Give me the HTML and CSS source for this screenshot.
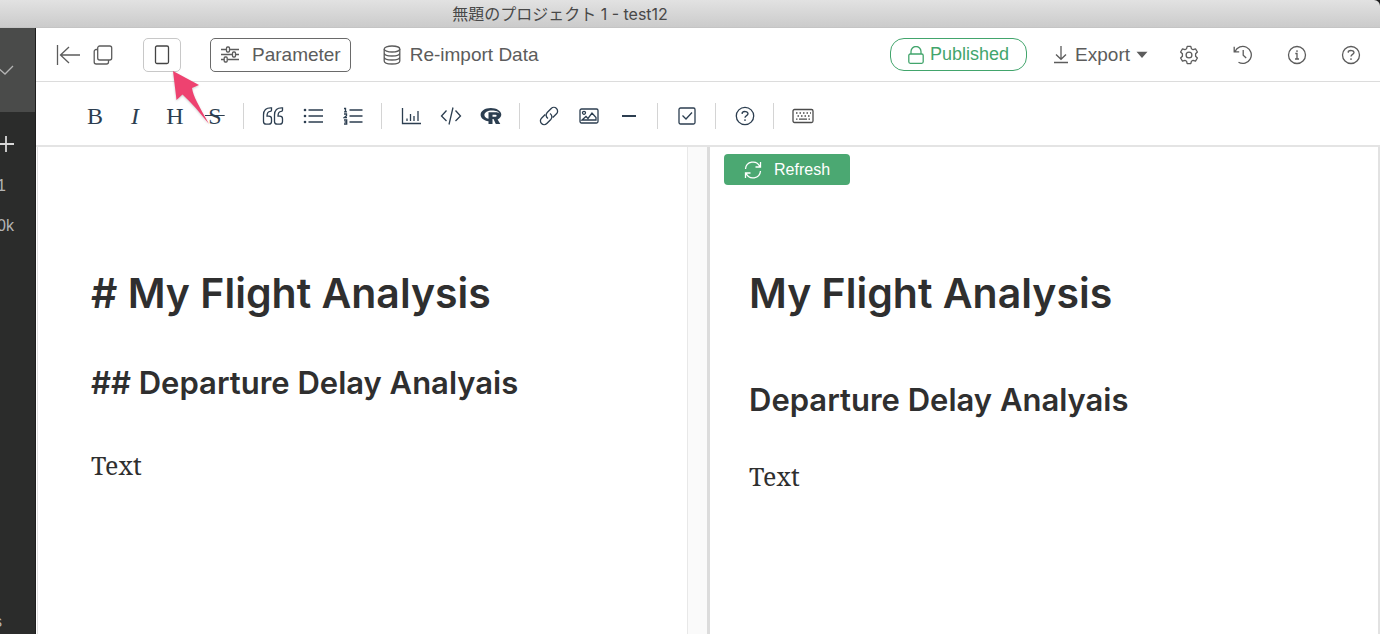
FILE: index.html
```html
<!DOCTYPE html>
<html lang="ja">
<head>
<meta charset="utf-8">
<title>無題のプロジェクト 1 - test12</title>
<link rel="stylesheet" href="styles.css">
</head>
<body>
<div class="window">
  <header class="titlebar">無題のプロジェクト 1 - test12</header>
  <div class="workspace">
    <aside class="sidebar">
      <button class="side-head" aria-label="Expand project"><svg width="20" height="12" viewBox="0 0 20 12"><path d="M1 2l9 8 8-8"/></svg></button>
      <button class="side-add" aria-label="Add"><svg width="18" height="18" viewBox="0 0 18 18"><path d="M1 9h16M9 1v16"/></svg></button>
      <span class="side-item side-count">1</span>
      <span class="side-item side-rows">0k</span>
      <span class="side-item side-foot">s</span>
    </aside>
    <main class="note">
      <div class="actions">
        <button class="plain back" aria-label="Back"><svg width="24" height="22" viewBox="0 0 24 22"><path d="M1.500 1v20M4.500 11H24M13 3l-8.500 8 8.500 8"/></svg></button>
        <button class="plain copy" aria-label="Duplicate"><svg width="20" height="20" viewBox="0 0 20 20"><rect x="4.700" y="1" width="14" height="14" rx="2"/><path d="M4.700 4.500H3.200a2 2 0 0 0-2 2V17a2 2 0 0 0 2 2h10.300a2 2 0 0 0 2-2v-2"/></svg></button>
        <button class="boxed layout" aria-label="Single pane">
          <svg width="16" height="20" viewBox="0 0 16 20"><rect x="1.500" y="1" width="13" height="17.500" rx="1.500"/></svg>
        </button>
        <button class="boxed parameter">
          <svg width="20" height="18" viewBox="0 0 20 18"><path d="M1 3.500h5.500M9.500 3.500H19M1 8.500h11.500M15.500 8.500H19M1 13.500h3M7.500 13.500H19"/><rect x="6.500" y="1" width="3" height="5" rx="1"/><rect x="12.500" y="6" width="3" height="5" rx="1"/><rect x="4.200" y="11" width="3" height="5" rx="1"/></svg>
          Parameter
        </button>
        <button class="plain reimport">
          <svg width="18" height="20" viewBox="0 0 18 20"><ellipse cx="9" cy="4" rx="7.800" ry="3"/><path d="M1.200 4v12c0 1.700 3.500 3 7.800 3s7.800-1.300 7.800-3V4M1.200 8c0 1.700 3.500 3 7.800 3s7.800-1.300 7.800-3M1.200 12c0 1.700 3.500 3 7.800 3s7.800-1.300 7.800-3"/></svg>
          Re-import Data
        </button>
        <div class="actions-end">
          <button class="published">
            <svg width="16" height="18" viewBox="0 0 16 18"><rect x="0.800" y="8" width="14.400" height="9.300" rx="1.500"/><path d="M3 8V5.500a5 5 0 0 1 10 0V8"/></svg>
            Published
          </button>
          <button class="plain export">
            <svg width="16" height="18" viewBox="0 0 16 18"><path d="M8 0v13M3 8.500l5 4.800 5-4.800M1 16.500h14"/></svg>
            Export
            <svg class="caret" width="12" height="8" viewBox="0 0 12 8"><path d="M0.500 0.800h11L6 7z"/></svg>
          </button>
          <button class="plain gear" aria-label="Settings"><svg width="20" height="20" viewBox="0 0 20 20"><path stroke-linejoin="round" d="M8.200 1.300h3.600l.6 2.400 1.700 1 2.400-.8 1.900 3.100-1.800 1.800v2.400l1.800 1.800-1.900 3.100-2.400-.8-1.700 1-.6 2.400H8.200l-.6-2.400-1.700-1-2.400.8L1.600 13l1.800-1.800V8.800L1.600 7l1.900-3.100 2.400.8 1.700-1z"/><circle cx="10" cy="10" r="2.900"/></svg></button>
          <button class="plain" aria-label="History"><svg width="20" height="20" viewBox="0 0 20 20"><path d="M2 6.500A8.500 8.500 0 1 1 5.500 17.200M1.200 1.800v5h5M10.200 5v5.200l3 2.800"/></svg></button>
          <button class="plain" aria-label="Information"><svg width="20" height="20" viewBox="0 0 20 20"><circle cx="10" cy="10" r="8.500"/><path d="M8.300 8.500H10V14M8 14h4M10 5.300v1.600"/></svg></button>
          <button class="plain" aria-label="Help"><svg width="20" height="20" viewBox="0 0 20 20"><circle cx="10" cy="10" r="8.500"/><path d="M7.300 7.700V6.300C8.800 5.200 13 5 13 7.600c0 1.900-3 1.700-3 4M10 13.300v1.600"/></svg></button>
        </div>
      </div>

      <div class="format" role="toolbar" aria-label="Formatting">
        <button class="tool">B</button>
        <button class="tool italic">I</button>
        <button class="tool">H</button>
        <button class="tool"><s class="strike">S</s></button>
        <span class="sep"></span>
        <button class="tool" aria-label="Quote"><svg width="22" height="20" viewBox="0 0 22 20"><path d="M9.500 1.800C4 1.500 1.500 4 1.500 9v6.500c0 1.800 1 2.700 2.700 2.700h2.600c1.700 0 2.700-.9 2.700-2.700v-2.800c0-1.700-1-2.600-2.700-2.600H5c0-3.200 1-4.700 3.300-4.800.8 0 1.200-.3 1.200-1zM20.500 1.800c-5.500-.3-8 2.200-8 7.200v6.500c0 1.800 1 2.700 2.700 2.700h2.600c1.700 0 2.700-.9 2.700-2.700v-2.800c0-1.700-1-2.600-2.700-2.600H16c0-3.200 1-4.700 3.300-4.800.8 0 1.200-.3 1.200-1z"/></svg></button>
        <button class="tool" aria-label="Bulleted list"><svg width="20" height="18" viewBox="0 0 20 18"><path d="M5.500 3H20M5.500 9H20M5.500 15H20"/><g class="solid"><circle cx="2" cy="3" r="1.300"/><circle cx="2" cy="9" r="1.300"/><circle cx="2" cy="15" r="1.300"/></g></svg></button>
        <button class="tool" aria-label="Numbered list"><svg width="20" height="18" viewBox="0 0 20 18"><path d="M6.500 3H19.500M6.500 9H19.500M6.500 15H19.500"/><path d="M1 1.500h1.500v3.300M1 4.800h3M1 7h2.500v1.800L1.200 10.700H4M1 13h2.700v4H1M1.500 15h2"/></svg></button>
        <span class="sep"></span>
        <button class="tool" aria-label="Chart"><svg width="20" height="20" viewBox="0 0 20 20"><path d="M1.500 2v15.500H20M6 12.500V15M9.500 8v7M13 10v5M17 5v10"/></svg></button>
        <button class="tool" aria-label="Code"><svg width="22" height="20" viewBox="0 0 22 20"><path d="M6.500 4.500L1.500 10l5 5M15.500 4.500l5 5.500-5 5M13 1.500L9 18.500"/></svg></button>
        <button class="tool" aria-label="R script"><svg width="22" height="18" viewBox="0 0 22 18"><path class="solid" fill-rule="evenodd" d="M10.800 1C5 1 .6 3.900.6 7.700c0 3.300 3.400 6 7.900 6.600V17h4v-5h1l2.300 5h4.500l-2.700-4.600C20 11.400 21.300 9.700 21.300 7.600 21.300 3.900 16.500 1 10.800 1zM8.500 11.800C5.900 11.100 4.400 9.700 4.400 7.900c0-2.600 3.300-4.500 7.500-4.500 4 0 7 1.200 7.600 3.300-.7-1-2-1.500-3.700-1.500H8.500zm4-4.100h3c1.500 0 1.500 2.100 0 2.100h-3z"/></svg></button>
        <span class="sep"></span>
        <button class="tool" aria-label="Link"><svg width="20" height="20" viewBox="0 0 20 20"><path d="M9 12.500a3.900 3.900 0 0 1-.8-6l4-4a3.700 3.700 0 0 1 5.300 5.300l-3.700 3.700M11 7.500a3.900 3.900 0 0 1 .8 6l-4 4a3.700 3.700 0 0 1-5.300-5.300l3.700-3.700"/></svg></button>
        <button class="tool" aria-label="Image"><svg width="20" height="16" viewBox="0 0 20 16"><rect x="1" y="1" width="18" height="14" rx="1.500"/><circle cx="5" cy="4.800" r="1.500"/><path d="M3 12l4-3.500 2 2L13 5l4 4.500V12z"/></svg></button>
        <button class="tool" aria-label="Horizontal rule"><svg class="heavy" width="16" height="4" viewBox="0 0 16 4"><path d="M1 2h14"/></svg></button>
        <span class="sep"></span>
        <button class="tool" aria-label="Task"><svg width="18" height="18" viewBox="0 0 18 18"><rect x="1" y="1" width="16" height="16" rx="1.500"/><path d="M4.500 8.500l3.500 3.500 6-6.500"/></svg></button>
        <span class="sep"></span>
        <button class="tool" aria-label="Syntax help"><svg width="20" height="20" viewBox="0 0 20 20"><circle cx="10" cy="10" r="8.700"/><path d="M7.200 7.900V6.700C8.500 5 13 5 13 7.800c0 2-3 1.700-3 4M10 13.200v1.800"/></svg></button>
        <span class="sep"></span>
        <button class="tool keyboard" aria-label="Keyboard shortcuts"><svg width="22" height="16" viewBox="0 0 22 16"><rect x="1" y="1.500" width="20" height="13" rx="1.500"/><path stroke-dasharray="1.500 2" d="M4 5h15M5.500 8h12"/><path d="M4 11.200h1.500M7 11.200h8M16.500 11.200H18"/></svg></button>
      </div>

      <div class="panes">
        <section class="editor" contenteditable="true" role="textbox" aria-multiline="true" aria-label="Markdown source" spellcheck="false">
          <p class="h1"># My Flight Analysis</p>
          <p class="h2">## Departure Delay Analyais</p>
          <p class="body">Text</p>
        </section>
        <div class="scroll-track"></div>
        <section class="preview">
          <button class="refresh">
            <svg width="18" height="18" viewBox="0 0 18 18"><path d="M1.500 8A7.500 7.500 0 0 1 15.800 5.500M16.500 1v5h-5M16.500 10A7.500 7.500 0 0 1 2.200 12.500M1.500 17v-5h5"/></svg>
            Refresh
          </button>
          <h1 class="h1">My Flight Analysis</h1>
          <h2 class="h2">Departure Delay Analyais</h2>
          <p class="body">Text</p>
        </section>
      </div>
      <svg class="pointer" width="42" height="56" viewBox="0 0 42 56" aria-hidden="true"><path d="M3 1l26 14-7 3c1 8 7 18 17 36C30 43 22 33 12.500 24.500L6.500 30z"/></svg>
    </main>
  </div>
</div>
</body>
</html>
```
FILE: styles.css
```css
* { box-sizing: border-box; }
body {
  margin: 0;
  background: #1d1d1d;
  color: #5c5c5c;
  font-family: "Liberation Sans", "Noto Sans CJK JP", sans-serif;
}
button {
  margin: 0;
  padding: 0;
  border: 0;
  background: none;
  color: inherit;
  font: inherit;
  white-space: nowrap;
}
svg {
  display: block;
  flex: none;
  fill: none;
  stroke: currentColor;
  stroke-width: 1.3;
}
.window {
  display: flex;
  flex-direction: column;
  min-height: 100vh;
}
.titlebar {
  height: 28px;
  border-bottom: 1px solid #c4c4c4;
  border-top-right-radius: 6px;
  background: linear-gradient(#e2e2e2, #cbcbcb);
  color: #484848;
  font: 16px/28px Inter, "Noto Sans CJK JP", sans-serif;
  text-align: center;
  padding-right: 260px;
}
.workspace { display: flex; flex: 1; }

.sidebar {
  display: flex;
  flex-direction: column;
  align-items: flex-end;
  width: 36px;
  overflow: hidden;
  background: #2b2c2b;
  color: #b4b4b4;
  border-right: 1px solid #1e1e1e;
  font: 16px/20px "Liberation Sans", sans-serif;
}
.side-head {
  display: flex;
  align-items: center;
  justify-content: flex-end;
  width: 100%;
  height: 84px;
  padding-right: 20px;
  background: #4a4b4a;
}
.side-add { margin: 23px 20px 0 0; color: #d8d8d8; }
.side-add svg { stroke-width: 1.8; }
.side-count { margin: 23px 29px 0 0; }
.side-rows { margin: 20px 21px 0 0; }
.side-foot { margin: auto 33px 2px 0; }

.note {
  position: relative;
  display: flex;
  flex: 1;
  flex-direction: column;
  min-width: 0;
  background: #fff;
}
.actions {
  display: flex;
  align-items: center;
  height: 54px;
  padding: 0 19px 0 20px;
  border-bottom: 1px solid #dcdcdc;
  font-size: 19px;
}
.actions button { display: flex; align-items: center; }
.copy { margin-left: 13px; }
.boxed { height: 34px; border: 1px solid #6a6a6a; border-radius: 5px; }
.layout {
  width: 38px;
  justify-content: center;
  margin-left: 30px;
  border-color: #c8c8c8;
  color: #444;
}
.parameter { gap: 12px; margin-left: 29px; padding: 0 9px; }
.reimport { gap: 9px; margin-left: 32px; }
.actions-end {
  display: flex;
  align-items: center;
  gap: 34px;
  margin-left: auto;
}
.published {
  gap: 6px;
  height: 33px;
  padding: 0 17px;
  border: 1px solid #42a56c;
  border-radius: 14px;
  color: #42a56c;
  font-size: 18px;
}
.export { gap: 6px; margin: 0 -3px 0 -8px; }
.caret { fill: currentColor; stroke: none; }

.format {
  display: flex;
  align-items: center;
  height: 65px;
  padding: 4px 0 0 39px;
  border-bottom: 2px solid #e4e4e4;
  color: #2c3e50;
}
.tool {
  display: flex;
  align-items: center;
  justify-content: center;
  width: 40px;
  height: 32px;
  font: 24px/32px "Liberation Serif", serif;
}
.italic { font-style: italic; }
.strike { padding: 0 3px; background: linear-gradient(currentColor, currentColor) center / 100% 1px no-repeat; text-decoration: none; }
.solid { fill: currentColor; stroke: none; }
.heavy { stroke-width: 2; }
.keyboard { color: #4c4c4c; }
.sep { width: 1px; height: 26px; margin: 0 9px 0 8px; background: #d4d4d4; }

.panes {
  display: flex;
  flex: 1;
  border: solid #e2e2e2;
  border-width: 0 2px 0 1px;
  margin-left: 1px;
  color: #2f2f2f;
}
.panes p, .panes h1, .panes h2 { margin: 0; }
.editor { flex: 1; padding: 120px 53px 0; outline: 0; }
.scroll-track {
  width: 23px;
  border: solid #e8e8e8;
  border-width: 0 3px 0 1px;
  border-right-color: #dcdcdc;
  background: #fafafa;
}
.preview { flex: 0 0 calc(50% - 2px); padding: 7px 40px 0 14px; }
.h1 { font: 600 41px/52px Inter, sans-serif; }
.h2 { font: 600 31px/40px Inter, sans-serif; }
.body { font: 25px/32px "Noto Serif", "Liberation Serif", serif; }
.panes .editor .h2 { margin-top: 44px; }
.panes .editor .body { margin-top: 46px; }
.panes .preview .h1 { margin: 82px 0 0 25px; }
.panes .preview .h2 { margin: 61px 0 0 25px; }
.panes .preview .body { margin: 40px 0 0 25px; }
.refresh {
  display: flex;
  align-items: center;
  gap: 12px;
  height: 31px;
  padding: 0 20px;
  border-radius: 4px;
  background: #4ba872;
  color: #fff;
  font-size: 16px;
}
.pointer {
  position: absolute;
  left: 134px;
  top: 42px;
  fill: #ee4270;
  stroke: none;
  filter: drop-shadow(0 1px 1px #0003);
  pointer-events: none;
}
```
